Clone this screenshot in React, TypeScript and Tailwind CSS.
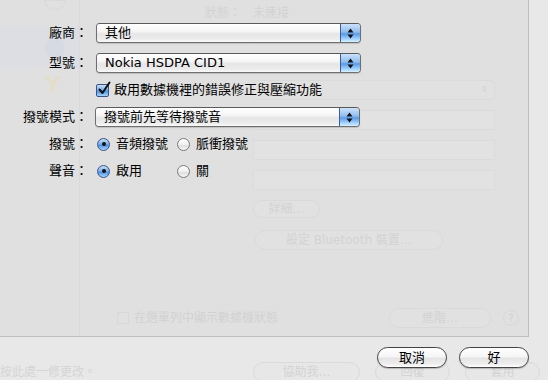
import React from 'react';

const font = { fontFamily: '"Lucida Grande", "DejaVu Sans", "Noto Sans CJK TC", sans-serif' };

function Arrows() {
  return (
    <svg width="7" height="11" viewBox="0 0 7 11" className="block">
      <path d="M3.5 0.5 L6.5 4.5 L0.5 4.5 Z" fill="#111" />
      <path d="M3.5 10.5 L6.5 6.5 L0.5 6.5 Z" fill="#111" />
    </svg>
  );
}

function Popup({ value }: { value: string }) {
  return (
    <div className="flex h-[20px] w-[265px] rounded-[4px] border border-[#6e6e6e] border-t-[#5a5a5a] shadow-[0_1px_1px_rgba(0,0,0,0.15)] overflow-hidden">
      <div className="flex-1 flex items-center pl-[8px] text-[13px] text-black bg-[linear-gradient(to_bottom,#ffffff_0%,#f6f6f6_40%,#e6e6e6_55%,#ececec_85%,#fafafa_100%)]">
        {value}
      </div>
      <div className="w-[20px] flex items-center justify-center border-l border-[#3b5f9e] bg-[linear-gradient(to_bottom,#cde2fa_0%,#8fbdf0_45%,#5b9ae6_55%,#a9d6ff_85%,#d6f2ff_100%)]">
        <Arrows />
      </div>
    </div>
  );
}

function Radio({ on }: { on: boolean }) {
  return on ? (
    <span className="w-[13px] h-[13px] rounded-full border border-[#3a5487] flex items-center justify-center bg-[linear-gradient(to_bottom,#c6ddf7_0%,#7eb1ec_45%,#4f8fe0_55%,#a6d6ff_100%)]">
      <span className="w-[4px] h-[4px] rounded-full bg-[#111]" />
    </span>
  ) : (
    <span className="w-[13px] h-[13px] rounded-full border border-[#7a7a7a] bg-[linear-gradient(to_bottom,#ffffff_0%,#f0f0f0_50%,#dedede_60%,#f8f8f8_100%)]" />
  );
}

function Checkbox() {
  return (
    <span className="relative w-[13px] h-[13px] rounded-[2px] border border-[#3a5487] bg-[linear-gradient(to_bottom,#c6ddf7_0%,#7eb1ec_45%,#4f8fe0_55%,#a6d6ff_100%)]">
      <svg width="14" height="15" viewBox="0 0 14 15" className="absolute left-[0px] top-[-4px]">
        <path d="M2.5 8.5 L5.5 12 L12.5 1.5" stroke="#111" strokeWidth="2" fill="none" strokeLinecap="round" strokeLinejoin="round" />
      </svg>
    </span>
  );
}

function Label({ children }: { children: React.ReactNode }) {
  return <div className="w-[96px] text-right text-[13px] text-black pr-[8px] shrink-0">{children}</div>;
}

function Pill({ children }: { children: React.ReactNode }) {
  return (
    <button className="w-[70px] h-[21px] rounded-full border border-[#444] text-[13px] text-black flex items-center justify-center shadow-[0_1px_1px_rgba(0,0,0,0.2)] bg-[linear-gradient(to_bottom,#ffffff_0%,#f6f6f6_45%,#e4e4e4_55%,#eeeeee_85%,#ffffff_100%)]">
      {children}
    </button>
  );
}

function Ghost({ className = '', children }: { className?: string; children?: React.ReactNode }) {
  return (
    <div className={`rounded-full border border-[#dadada] bg-[#e1e1e1] flex items-center justify-center text-[12px] text-[#d3d3d3] whitespace-nowrap ${className}`}>
      {children}
    </div>
  );
}

export default function App() {
  return (
    <div className="relative w-[548px] h-[380px] overflow-hidden bg-[#e8e8e8] select-none" style={font}>
      {/* window content behind the sheet, faded */}
      <div className="flex flex-col">
        <div className="flex h-[337px] w-[529px] border-r border-b border-[#bdbdbd] bg-[#e0e0e0]">
          <div className="w-[80px] border-r border-[#d9d9d9] flex flex-col">
            <div className="h-[27px] flex justify-center pt-[2px]">
              <div className="w-[22px] h-[10px] mt-[-2px] ml-[30px] rounded-b-full border border-[#d9d9d9]" />
            </div>
            <div className="h-[41px] bg-[#dcdee3] flex items-center pl-[45px]">
              <div className="w-[20px] h-[20px] rounded-full bg-[#d6dae2]" />
            </div>
            <div className="flex pl-[45px] pt-[6px]">
              <div className="text-[22px] leading-none text-[#e4ddc9] font-bold">Y</div>
            </div>
          </div>
          <div className="flex-1 flex flex-col pl-[173px] pr-[33px]">
            <div className="mt-[4px] h-[14px] text-[12px] text-[#d3d3d3] flex gap-[12px] ml-[-48px]">
              <span>狀態：</span><span>未連接</span>
            </div>
            <div className="mt-[62px] h-[20px] rounded-[4px] border border-[#dbdbdb] bg-[#e1e1e1] flex justify-end pr-[6px] items-center text-[9px] text-[#d4d4d4]">⇕</div>
            <div className="mt-[10px] h-[20px] border border-[#dbdbdb] bg-[#e2e2e2]" />
            <div className="mt-[10px] h-[20px] border border-[#dbdbdb] bg-[#e2e2e2]" />
            <div className="mt-[10px] h-[20px] border border-[#dbdbdb] bg-[#e2e2e2]" />
            <Ghost className="mt-[10px] h-[18px] w-[67px]">詳細…</Ghost>
            <Ghost className="mt-[12px] h-[20px] w-[188px] ml-[2px]">設定 Bluetooth 裝置…</Ghost>
            <div className="mt-[58px] flex items-center text-[12px] text-[#d2d2d2]">
              <span className="ml-[-136px] w-[12px] h-[12px] border border-[#d8d8d8] mr-[5px]" />
              <span>在選單列中顯示數據機狀態</span>
              <Ghost className="ml-auto h-[20px] w-[102px]">進階…</Ghost>
              <span className="ml-[12px] mr-[-24px] w-[16px] h-[16px] rounded-full border border-[#d8d8d8] text-[10px] flex items-center justify-center">?</span>
            </div>
          </div>
        </div>
        <div className="flex items-center h-[43px] pt-[26px] text-[12px] text-[#d5d5d5]">
          <span className="w-[100px] shrink-0 whitespace-nowrap">按此處一修更改。</span>
          <Ghost className="ml-[153px] h-[20px] w-[107px] shrink-0 bg-[#e7e7e7]">協助我…</Ghost>
          <Ghost className="ml-[15px] h-[20px] w-[75px] shrink-0 bg-[#e7e7e7]">回復</Ghost>
          <Ghost className="ml-[15px] h-[20px] w-[75px] shrink-0 bg-[#e7e7e7]">套用</Ghost>
        </div>
      </div>

      {/* sheet */}
      <div className="absolute inset-0 flex flex-col pt-[23px]">
        <div className="flex items-center h-[20px]">
          <Label>廠商：</Label>
          <Popup value="其他" />
        </div>
        <div className="flex items-center h-[20px] mt-[10px]">
          <Label>型號：</Label>
          <Popup value="Nokia HSDPA CID1" />
        </div>
        <div className="flex items-center h-[16px] mt-[9px] pl-[96px]">
          <Checkbox />
          <span className="ml-[5px] text-[13px] text-black">啟用數據機裡的錯誤修正與壓縮功能</span>
        </div>
        <div className="flex items-center h-[20px] mt-[9px]">
          <Label>撥號模式：</Label>
          <div className="ml-[-1px]"><Popup value="撥號前先等待撥號音" /></div>
        </div>
        <div className="flex items-center h-[18px] mt-[8px]">
          <Label>撥號：</Label>
          <div className="flex items-center w-[80px] ml-[1px]">
            <Radio on />
            <span className="ml-[6px] text-[13px] text-black">音頻撥號</span>
          </div>
          <div className="flex items-center">
            <Radio on={false} />
            <span className="ml-[6px] text-[13px] text-black">脈衝撥號</span>
          </div>
        </div>
        <div className="flex items-center h-[18px] mt-[9px]">
          <Label>聲音：</Label>
          <div className="flex items-center w-[80px] ml-[1px]">
            <Radio on />
            <span className="ml-[6px] text-[13px] text-black">啟用</span>
          </div>
          <div className="flex items-center">
            <Radio on={false} />
            <span className="ml-[6px] text-[13px] text-black">關</span>
          </div>
        </div>
        <div className="mt-auto mb-[12px] flex justify-end gap-[12px] pr-[19px]">
          <Pill>取消</Pill>
          <Pill>好</Pill>
        </div>
      </div>
    </div>
  );
}
